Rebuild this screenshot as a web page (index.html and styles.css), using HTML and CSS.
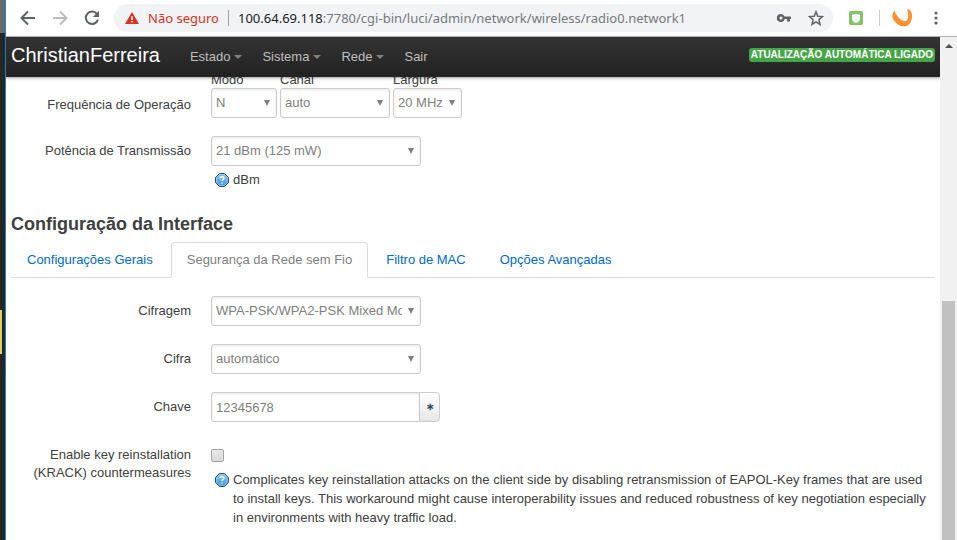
FILE: index.html
```html
<!DOCTYPE html>
<html lang="pt-BR">
<head>
<meta charset="utf-8">
<title>ChristianFerreira - LuCI</title>
<link rel="stylesheet" href="styles.css">
</head>
<body>
<svg class="defs" aria-hidden="true">
  <defs>
    <linearGradient id="help-fill" x1="0" y1="0" x2="0" y2="1">
      <stop offset="0" stop-color="#8cc4f0"/><stop offset="1" stop-color="#3f93dc"/>
    </linearGradient>
    <symbol id="help" viewBox="0 0 14 14">
      <path d="M4.5.5h5l4 4v5l-4 4h-5l-4-4v-5z" fill="url(#help-fill)" stroke="#1d5288"/>
      <path d="M4.7 1.6h4.6l3.1 3.1v4.6l-3.1 3.1H4.7L1.6 9.3V4.700z" fill="none" stroke="#a9d3f5" stroke-width=".7"/>
      <path d="M4.900 5.200C5 3.300 9 3.200 9 5.200c0 1.300-2 1.300-2 2.900M7 9.400v1.400" fill="none" stroke="#fff" stroke-width="1.400"/>
    </symbol>
  </defs>
</svg>
<div class="desktop-edge"><div class="edge-top"></div><div class="edge-mark"></div></div>
<div class="browser">
  <div class="toolbar">
    <button class="tool" aria-label="Voltar"><svg width="16" height="16" viewBox="0 0 16 16"><path d="M15 8H2M8 1.500L1.500 8 8 14.500" fill="none" stroke="#5f6368" stroke-width="2"/></svg></button>
    <button class="tool" aria-label="Avançar"><svg width="16" height="16" viewBox="0 0 16 16"><path d="M1 8h13M8 1.500L14.500 8 8 14.500" fill="none" stroke="#babcbe" stroke-width="2"/></svg></button>
    <button class="tool" aria-label="Recarregar"><svg width="16" height="16" viewBox="0 0 16 16"><path d="M13.300 4.500A6.200 6.200 0 1 0 14 9.500" fill="none" stroke="#5f6368" stroke-width="2"/><path d="M15 .800V7H8.800z" fill="#5f6368"/></svg></button>
    <div class="address">
      <svg width="14" height="12" viewBox="0 0 14 12"><path d="M7 0l7 12H0z" fill="#d93025"/><path d="M7 4.300v3.600M7 9v1.500" stroke="#fff" stroke-width="1.500"/></svg>
      <span class="unsafe">Não seguro</span>
      <span class="bar"></span>
      <span class="url"><b>100.64.69.118</b>:7780/cgi-bin/luci/admin/network/wireless/radio0.network1</span>
      <button class="tool" aria-label="Senha"><svg width="16" height="10" viewBox="0 0 16 10"><path fill-rule="evenodd" d="M5 1a4 4 0 0 1 3.700 2.500H15v2.500h-1V8.500h-3V6H8.700A4 4 0 1 1 5 1zm0 2.500a1.500 1.500 0 1 0 0 3 1.500 1.500 0 0 0 0-3z" fill="#5f6368"/></svg></button>
      <button class="tool" aria-label="Favoritos"><svg width="16" height="16" viewBox="0 0 16 16"><path d="M8 1.800l1.800 4.400 4.700.400-3.600 3.100 1.100 4.600L8 11.800l-4 2.500 1.100-4.600L1.500 6.600l4.700-.4z" fill="none" stroke="#5f6368" stroke-width="1.500"/></svg></button>
    </div>
    <button class="tool" aria-label="Extensão"><svg width="14" height="14" viewBox="0 0 14 14"><rect width="14" height="14" rx="2" fill="#83c464"/><path d="M3 3.500q2 .300 4-.700 2 1 4 .700v4Q11 10.500 7 12 3 10.500 3 7.500z" fill="#fff"/></svg></button>
    <span class="bar light"></span>
    <button class="tool profile" aria-label="Perfil"><svg width="20" height="18" viewBox="0 0 20 18"><path d="M2.500 1.500Q-.5 5 .5 9C3 14 8 17.500 12 17.500 18 17.500 20.500 11 20 5.500 19.500 3 18.500 1.500 17 .5L15 .3C16.500 4 16.800 10 14.500 11.700 10.500 13.500 5 8.500 2.500 1.500z" fill="#ff9230"/></svg></button>
    <button class="tool" aria-label="Menu"><svg width="4" height="14" viewBox="0 0 4 14" fill="#5f6368"><circle cx="2" cy="2" r="1.600"/><circle cx="2" cy="7" r="1.600"/><circle cx="2" cy="12" r="1.600"/></svg></button>
  </div>
  <div class="viewport">
    <div class="page">
      <header>
        <a class="brand" href="#">ChristianFerreira</a>
        <nav>
          <a class="drop" href="#">Estado</a>
          <a class="drop" href="#">Sistema</a>
          <a class="drop" href="#">Rede</a>
          <a href="#">Sair</a>
        </nav>
        <span class="badge">ATUALIZAÇÃO AUTOMÁTICA LIGADO</span>
      </header>
      <main>
        <div class="row freq">
          <span class="label">Frequência de Operação</span>
          <div class="trio">
            <div class="mode"><label for="modo">Modo</label><span class="pick"><select id="modo"><option>N</option></select></span></div>
            <div class="channel"><label for="canal">Canal</label><span class="pick"><select id="canal"><option>auto</option></select></span></div>
            <div class="width"><label for="largura">Largura</label><span class="pick"><select id="largura"><option>20 MHz</option></select></span></div>
          </div>
        </div>
        <div class="row power">
          <label class="label" for="power">Potência de Transmissão</label>
          <div class="field">
            <span class="pick"><select id="power"><option>21 dBm (125 mW)</option></select></span>
            <div class="hint"><svg width="14" height="14"><use href="#help"/></svg><span>dBm</span></div>
          </div>
        </div>
        <h2>Configuração da Interface</h2>
        <div class="tabs">
          <a href="#">Configurações Gerais</a>
          <a class="active" href="#">Segurança da Rede sem Fio</a>
          <a href="#">Filtro de MAC</a>
          <a href="#">Opções Avançadas</a>
        </div>
        <div class="row">
          <label class="label" for="enc">Cifragem</label>
          <div class="field"><span class="pick"><select id="enc"><option>WPA-PSK/WPA2-PSK Mixed Mode</option></select></span></div>
        </div>
        <div class="row">
          <label class="label" for="cipher">Cifra</label>
          <div class="field"><span class="pick"><select id="cipher"><option>automático</option></select></span></div>
        </div>
        <div class="row">
          <label class="label" for="key">Chave</label>
          <div class="field key"><input id="key" type="text" value="12345678"><button aria-label="Revelar chave">∗</button></div>
        </div>
        <div class="row">
          <label class="label" for="krack">Enable key reinstallation (KRACK) countermeasures</label>
          <div class="field">
            <input id="krack" type="checkbox">
            <div class="hint"><svg width="14" height="14"><use href="#help"/></svg><span>Complicates key reinstallation attacks on the client side by disabling retransmission of EAPOL-Key frames that are used to install keys. This workaround might cause interoperability issues and reduced robustness of key negotiation especially in environments with heavy traffic load.</span></div>
          </div>
        </div>
      </main>
    </div>
    <div class="scrollbar"><div class="arrow"></div><div class="thumb"></div></div>
  </div>
</div>
</body>
</html>
```
FILE: styles.css
```css
* { box-sizing: border-box; }
body {
  margin: 0;
  height: 100vh;
  display: flex;
  overflow: hidden;
  background: #fff;
  color: #404040;
  font: 13px/18px "Liberation Sans", Arial, sans-serif;
}
a { text-decoration: none; color: #0069d6; }
svg { display: block; flex: none; }
.defs { position: absolute; width: 0; height: 0; }

/* Window edge */
.desktop-edge { width: 6px; flex: none; background: #262721; border-right: 1px solid #1a82d6; }
.edge-top { height: 33px; background: #696a66; }
.edge-mark { width: 2px; height: 44px; margin-top: 277px; background: #dccf62; }

.browser { flex: 1; min-width: 0; display: flex; flex-direction: column; }

/* Browser toolbar */
.toolbar {
  height: 37px;
  flex: none;
  display: flex;
  align-items: center;
  gap: 16px;
  padding: 0 19px 1px 14px;
  border-bottom: 1px solid #aeaeae;
}
.tool { border: 0; padding: 0; background: none; }
.address {
  flex: 1;
  min-width: 0;
  height: 28px;
  display: flex;
  align-items: center;
  gap: 9px;
  margin-left: -2px;
  padding: 0 9px 0 11px;
  border-radius: 14px;
  background: #f1f3f4;
  font: 13px/20px "Noto Sans", "Open Sans", sans-serif;
}
.address .tool + .tool { margin-left: 7px; }
.unsafe { color: #d93025; white-space: nowrap; }
.bar { width: 1px; height: 16px; background: #9aa0a6; }
.bar.light { background: #c8cacc; }
.profile { margin: 0 6px 0 -4px; }
.url { flex: 1; white-space: nowrap; color: #76797d; }
.url b { font-weight: 400; color: #202124; }

.viewport { flex: 1; min-height: 0; display: flex; }
.page { flex: 1; min-width: 0; overflow: hidden; }

/* Site header */
header {
  position: relative;
  z-index: 1;
  height: 40px;
  display: flex;
  align-items: center;
  padding: 0 5px;
  background: linear-gradient(#333, #222);
  box-shadow: 0 1px 3px rgba(0, 0, 0, .4);
}
.brand { color: #fff; font-size: 20px; line-height: 20px; margin: 0 20px 4px 0; }
nav { flex: 1; display: flex; }
nav a { color: #bfbfbf; padding: 0 10px; }
.drop { display: flex; align-items: center; gap: 4px; }
.drop::after {
  content: "";
  border: 4px solid transparent;
  border-top-color: #808080;
  border-bottom: 0;
}
.badge {
  margin-bottom: 4px;
  padding: 0 2px;
  border-radius: 3px;
  background: #46a546;
  color: #fff;
  font-size: 10px;
  line-height: 14px;
  font-weight: 700;
}

/* Form */
main { padding: 0 5px; }
.row { display: flex; gap: 20px; margin-bottom: 18px; }
.label { width: 180px; flex: none; padding-top: 6px; text-align: right; }
.freq { margin-top: -5px; }
.freq .label { padding-top: 24px; }
.trio { display: flex; gap: 3px; }
.trio label { display: block; line-height: 16px; }
.mode { width: 66px; }
.channel { width: 110px; }
.width { width: 69px; }
.field { flex: 1; min-width: 0; }
.pick { position: relative; display: block; width: 100%; }
.field .pick { width: 210px; }
.pick::after {
  content: "";
  position: absolute;
  right: 7px;
  top: 12px;
  border: 3px solid transparent;
  border-top: 6px solid #808080;
  border-bottom: 0;
}
select, input[type="text"] {
  display: block;
  width: 100%;
  height: 30px;
  padding: 0 18px 0 4px;
  border: 1px solid #ccc;
  border-radius: 3px;
  background: #fff;
  box-shadow: inset 0 1px 3px rgba(0, 0, 0, .1);
  color: #808080;
  font: inherit;
  appearance: none;
}
.hint { display: flex; gap: 4px; padding: 4px 4px 0; line-height: 19px; }
.hint svg { margin-top: 3px; }
.power { margin-bottom: 17px; }

h2 { margin: 0; font-size: 18px; line-height: 36px; }
.tabs { display: flex; margin-bottom: 18px; border-bottom: 1px solid #ddd; }
.tabs a {
  margin: 0 2px -1px 0;
  padding: 0 15px;
  border: 1px solid transparent;
  border-radius: 4px 4px 0 0;
  line-height: 34px;
}
.tabs .active { color: #808080; background: #fff; border-color: #ddd; border-bottom-color: #fff; }

.key { display: flex; }
.key input { width: 209px; border-radius: 3px 0 0 3px; }
.key button {
  width: 21px;
  height: 30px;
  margin-left: -1px;
  padding: 0;
  border: 1px solid #ccc;
  border-radius: 0 4px 4px 0;
  background: linear-gradient(#fff, #e6e6e6);
  color: #2d4a63;
  font: 700 10px/18px "Liberation Sans", Arial, sans-serif;
}
input[type="checkbox"] {
  display: block;
  width: 13px;
  height: 13px;
  margin: 9px 0 4px;
  border: 1px solid #a3a3a3;
  border-radius: 2px;
  background: linear-gradient(#e8e8e8, #d9d9d9);
  appearance: none;
}

/* Scrollbar */
.scrollbar { width: 17px; flex: none; padding: 7px 2px 0; background: #f1f1f1; display: flex; flex-direction: column; align-items: center; }
.arrow { border: 4px solid transparent; border-bottom-color: #505050; border-top: 0; }
.thumb { width: 13px; flex: 1; margin-top: 253px; background: #c1c1c1; }
```
